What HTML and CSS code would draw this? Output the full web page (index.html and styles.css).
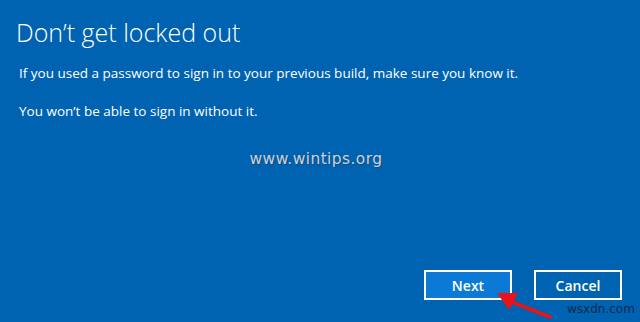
FILE: index.html
```html
<!DOCTYPE html>
<html>
<head>
<meta charset="utf-8">
<link rel="stylesheet" href="styles.css">
</head>
<body>
<div class="page">
  <h1 class="title">Don’t get locked out</h1>
  <p class="text first">If you used a password to sign in to your previous build, make sure you know it.</p>
  <p class="text">You won’t be able to sign in without it.</p>
  <div class="watermark">www.wintips.org</div>
  <div class="footer">
    <button class="btn primary">Next</button>
    <button class="btn">Cancel</button>
  </div>
  <svg class="arrow" width="70" height="40" viewBox="0 0 70 40">
    <line x1="60" y1="33" x2="22" y2="18" stroke="#e8141a" stroke-width="3.5" stroke-linecap="round"/>
    <polygon points="7,9 28,9 19,26" fill="#e8141a"/>
  </svg>
  <div class="credit">wsxdn.com</div>
</div>
</body>
</html>
```
FILE: styles.css
```css
html, body {
  margin: 0;
  padding: 0;
}
body {
  background: #0063b1;
  width: 640px;
  height: 322px;
  overflow: hidden;
}
.page {
  position: relative;
  height: 322px;
  display: flex;
  flex-direction: column;
  font-family: "Open Sans", "Noto Sans", sans-serif;
  color: #fff;
}
.title {
  margin: 14px 0 0 16px;
  font-weight: 300;
  font-size: 25px;
  line-height: 36px;
  letter-spacing: 0;
}
.text {
  margin: 0 0 0 19px;
  font-size: 13.5px;
  line-height: 20px;
  letter-spacing: 0;
}
.text.first {
  margin-top: 13px;
  margin-bottom: 18px;
}
.watermark {
  align-self: center;
  margin-top: 29px;
  font-family: "DejaVu Sans", Verdana, sans-serif;
  font-size: 15.5px;
  letter-spacing: 0.4px;
  color: #c3d3e4;
  text-shadow: 1px 1px 1px #23466b;
  transform: translateX(-4px);
}
.footer {
  margin-top: auto;
  margin-bottom: 22px;
  margin-right: 18px;
  display: flex;
  justify-content: flex-end;
  gap: 22px;
}
.btn {
  box-sizing: border-box;
  width: 88px;
  height: 30px;
  background: #0063b1;
  border: 2px solid #fff;
  color: #fff;
  font-family: "Open Sans", "Noto Sans", sans-serif;
  font-weight: 600;
  font-size: 14px;
  padding: 0;
}
.btn.primary {
  background: #0a7ad6;
}
.arrow {
  position: absolute;
  left: 490px;
  top: 284px;
}
.credit {
  position: absolute;
  left: 567px;
  top: 302px;
  font-family: "DejaVu Sans", Verdana, sans-serif;
  font-size: 12px;
  color: #0a2a4a;
}
```
